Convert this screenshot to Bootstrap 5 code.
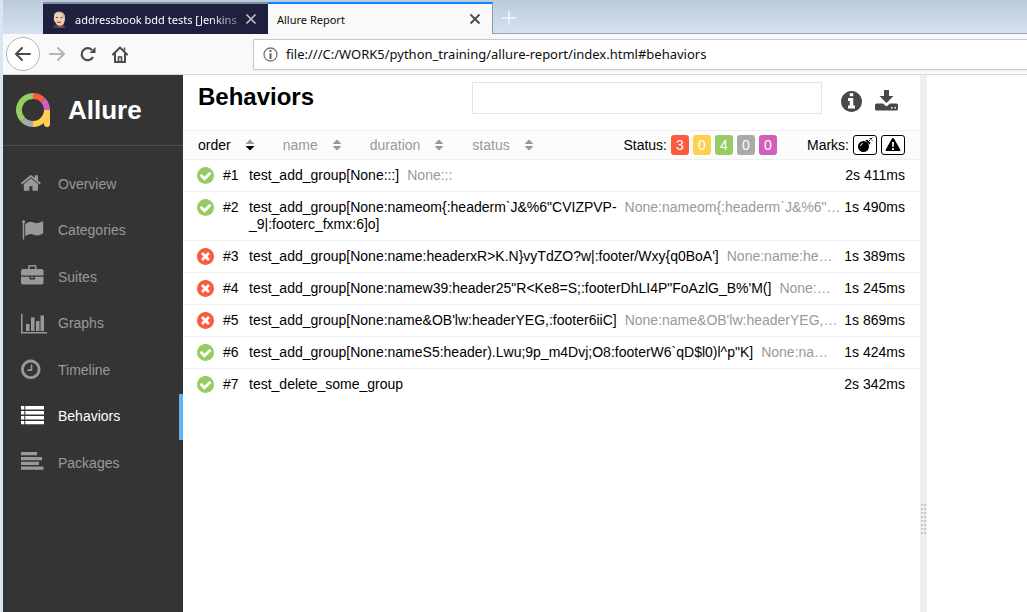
<!DOCTYPE html>
<html lang="en">
<head>
<meta charset="utf-8">
<meta name="viewport" content="width=device-width, initial-scale=1">
<title>Allure Report</title>
<link href="https://cdn.jsdelivr.net/npm/bootstrap@5.3.0/dist/css/bootstrap.min.css" rel="stylesheet">
<style>
body{font:14px/17px "Liberation Sans",Arial,sans-serif;color:#000;background:#fff;fill:currentColor}
button,.btn{font:inherit}
a{text-decoration:none}
svg{display:block;flex:none}
.window-frame{border-left:3px solid #d9e6f2}
.browser-ui{font-family:"Noto Sans","Segoe UI",sans-serif}
.tab-strip{height:34px;padding:2px 0 0 40px;background:linear-gradient(#bccbda,#d5e2f0);font-size:11px}
.tab-item{width:225px;padding:0 9px}
.tab-dark{background:#1f2040;color:#fff;border-top:2px solid #7f8fa5}
.tab-current{background:#f9f9fa;color:#0c0c0d;border-top:2px solid #0a84ff;border-right:1px solid #8b98a8}
.tab-fade{-webkit-mask-image:linear-gradient(90deg,#000 80%,#0004);mask-image:linear-gradient(90deg,#000 80%,#0004)}
.strip-edge{border-bottom:1px solid #97a3b1}
.toolbar{background:#f9f9fa;height:41px;padding-left:3px;border-bottom:1px solid #d9d9db;color:#4a4a4f}
.back-btn{width:34px;height:34px;border:1px solid #b4b4b6;background:#fff;border-radius:50%}
.tool-pair{gap:16px;margin-left:14px}
.url-box{height:31px;margin-left:125px;border:1px solid #c8c8ca;border-right:0;border-radius:2px 0 0 2px;background:#fff;font-size:13px;padding:0 9px;box-shadow:0 1px 3px #0000000d}
.url-box input{color:#0c0c0d;background:none;outline:0}
.side-panel{width:180px;background:#343434;color:#999}
.brand-row{height:71px;border-bottom:1px solid #505050;padding-left:13px;gap:18px;color:#fff;font-size:26px;line-height:32px}
.side-menu{min-height:325px;margin-top:15px}
.side-link{height:46px;padding-left:18px;gap:13px;color:#999}
.side-link svg{width:24px;height:24px}
.side-link:hover{color:#fff}
.side-link.active{color:#fff;border-right:4px solid #63b3f3}
.title-row{height:55px;padding:0 22px 0 15px}
.title-row h1{font-size:24px;line-height:28px;margin:8px 0 0}
.search-field{width:350px;height:32px;border:1px solid #e2e2e2;border-radius:0;margin-top:7px}
.tool-icons{color:#484848;gap:13px;margin:14px 0 0 19px}
.sort-bar{height:30px;background:#fcfcfc;border-top:1px solid #eceff1;border-bottom:1px solid #eceff1;padding:0 15px}
.sorters{gap:28px}
.sorter,.sorter:hover{color:#999;gap:14px}
.sorter.active{color:#000}
.mark-group{margin-left:30px}
.count-btn{width:18px;height:20px;border-radius:3px;color:#fff;line-height:20px}
.c-failed{background:#fd5a3e}.c-broken{background:#ffd050}.c-passed{background:#97cc64}.c-skipped{background:#aaa}.c-unknown{background:#d35ebe}
.mark-btn{width:24px;height:20px;border:1px solid #000;border-radius:3px;background:#fff;color:#000}
.case-row{padding:7px 15px 7px 14px;border-bottom:1px solid #eceff1;color:#000}
.case-row:last-child{border-bottom:0}
.case-row:hover{background:#fafafa}
.case-no{flex:0 0 26px;margin-left:9px}
.case-param{color:#999;min-width:0;margin:0 0 0 8px}
.is-passed{color:#97cc64}.is-failed{color:#fd5a3e}
.splitter{width:7px;background:#eceff1}
.grip{width:5px;height:30px;margin:429px 0 0 1px;background:repeating-linear-gradient(#c8c8c8 0 2px,#eceff1 2px 4px)}
.grip::after{content:"";display:block;width:1px;height:30px;margin-left:2px;background:#eceff1}
.detail-pane{flex:0 0 100px}
</style>
</head>
<body>
<svg width="0" height="0" class="position-absolute" aria-hidden="true">
<symbol id="ok" viewBox="128 128 1536 1536"><path d="M1412 734q0-28-18-46l-91-90q-19-19-45-19t-45 19l-408 407-226-226q-19-19-45-19t-45 19l-91 90q-18 18-18 46 0 27 18 45l362 362q19 19 45 19 27 0 46-19l543-543q18-18 18-45zm252 162q0 209-103 385.500t-279.500 279.500-385.500 103-385.500-103-279.500-279.500-103-385.500 103-385.500 279.500-279.500 385.500-103 385.500 103 279.500 279.500 103 385.500z"/></symbol>
<symbol id="bad" viewBox="128 128 1536 1536"><path d="M1277 1122q0-26-19-45l-181-181 181-181q19-19 19-45 0-27-19-46l-90-90q-19-19-46-19-26 0-45 19l-181 181-181-181q-19-19-45-19-27 0-46 19l-90 90q-19 19-19 46 0 26 19 45l181 181-181 181q-19 19-19 45 0 27 19 46l90 90q19 19 46 19 26 0 45-19l181-181 181 181q19 19 45 19 27 0 46-19l90-90q19-19 19-46zm387-226q0 209-103 385.500t-279.500 279.500-385.500 103-385.500-103-279.500-279.500-103-385.500 103-385.500 279.500-279.500 385.500-103 385.500 103 279.500 279.500 103 385.500z"/></symbol>
<symbol id="updown" viewBox="0 0 10 12"><path d="M5 0.500L9.500 5h-9z"/><path d="M.5 7h9L5 11.500z"/></symbol>
</svg>
<div class="window-frame d-flex flex-column min-vh-100">
  <header class="browser-ui">
    <div class="tab-strip d-flex">
      <div class="tab-item tab-dark d-flex align-items-center">
        <svg width="15" height="17" viewBox="0 0 15 17"><path d="M1 17l1-3 4-1 5 0 3 4z" fill="#344a5b"/><path d="M2 6Q2 1 7 1q6 0 6 6 0 7-5 8-3 0-5-4Q1 9 2 6z" fill="#efcdb2"/><path d="M2 7Q1 1 7 .500 13 1 13 7l-2-1q0-3-2-4-4-1-6 1z" fill="#c7b8a6"/><path d="M4 6.500h2M8.500 6.500h2M5 11q2 1 4 0" stroke="#5b4538" fill="none"/><path d="M6 14l2 1 3-1v3l-3-1-2 1z" fill="#d33833"/></svg>
        <span class="tab-fade text-nowrap overflow-hidden flex-grow-1 ms-1 ps-1">addressbook bdd tests [Jenkins</span>
        <button class="btn p-0 border-0" aria-label="Close tab"><svg width="16" height="16" viewBox="0 0 16 16" fill="none" stroke="#ccccd2" stroke-width="1.500"><path d="M3.500 3.500l9 9m0-9l-9 9"/></svg></button>
      </div>
      <div class="tab-item tab-current d-flex align-items-center">
        <span class="flex-grow-1">Allure Report</span>
        <button class="btn p-0 border-0" aria-label="Close tab"><svg width="16" height="16" viewBox="0 0 16 16" fill="none" stroke="#4a4a4f" stroke-width="1.800"><path d="M3.500 3.500l9 9m0-9l-9 9"/></svg></button>
      </div>
      <div class="strip-edge flex-grow-1 ps-2"><button class="btn p-0 border-0 mt-2" aria-label="New tab"><svg width="16" height="16" viewBox="0 0 16 16" stroke="#f4f7fa" stroke-width="1.500"><path d="M8 1v14M1 8h14"/></svg></button></div>
    </div>
    <div class="toolbar d-flex align-items-center">
      <button class="back-btn p-0 d-flex align-items-center justify-content-center" aria-label="Back"><svg width="18" height="16" viewBox="0 0 18 16" fill="none" stroke="#4a4a4f" stroke-width="2"><path d="M16 8H2m6-6L2 8l6 6" stroke-linecap="round" stroke-linejoin="round"/></svg></button>
      <button class="btn p-0 border-0 ms-2" aria-label="Forward"><svg width="18" height="16" viewBox="0 0 18 16" fill="none" stroke="#b5b5b7" stroke-width="2"><path d="M2 8h14m-6-6l6 6-6 6" stroke-linecap="round" stroke-linejoin="round"/></svg></button>
      <div class="tool-pair d-flex align-items-center">
      <button class="btn p-0 border-0" aria-label="Reload"><svg width="16" height="16" viewBox="0 0 16 16"><path d="M13 11A6 6 0 1 1 12 4" fill="none" stroke="#4a4a4f" stroke-width="2.200"/><path d="M15.500 1v6h-6z" fill="#4a4a4f"/></svg></button>
      <button class="btn p-0 border-0" aria-label="Home"><svg width="16" height="17" viewBox="0 0 16 17" fill="none" stroke="#4a4a4f" stroke-width="2"><path d="M1 8.500l7-7 7 7M3 8v8h10V8" stroke-linecap="round" stroke-linejoin="round"/><path d="M6.500 16v-5h3v5M12.500 1.500v3" stroke-width="1.500"/></svg></button>
      </div>
      <div class="url-box d-flex align-items-center flex-grow-1">
        <svg width="15" height="15" viewBox="0 0 15 15"><circle cx="7.500" cy="7.500" r="6.500" fill="none" stroke="#737377" stroke-width="1.300"/><path d="M6.500 3h2v2h-2zM6.500 6.200h2V12h-2z" fill="#606064"/></svg>
        <input class="border-0 flex-grow-1 p-0 ms-2" aria-label="Address" value="file:///C:/WORK5/python_training/allure-report/index.html#behaviors">
      </div>
    </div>
  </header>
  <div class="d-flex flex-grow-1">
    <aside class="side-panel flex-shrink-0">
      <div class="brand-row d-flex align-items-center fw-bold">
        <svg width="34" height="34" viewBox="0 0 34 34" fill="none" stroke-width="6"><path d="M17 31A14 14 0 0 1 7.100 26.900" stroke="#aaa"/><path d="M7.100 26.900A14 14 0 0 1 17 3" stroke="#97cc64"/><path d="M17 3a14 14 0 0 1 9.900 4.100" stroke="#fd5a3e"/><path d="M26.900 7.100A14 14 0 0 1 31 17" stroke="#d35ebe"/><path d="M31 17A14 14 0 0 1 17 31" stroke="#ffd050"/><path d="M31 17v14" stroke="#ffd050"/><circle cx="31" cy="31" r="3" fill="#ffd050" stroke="none"/></svg>
        <span>Allure</span>
      </div>
      <nav class="side-menu d-flex flex-column justify-content-between" aria-label="Report">
        <a class="side-link d-flex align-items-center" href="#overview"><svg viewBox="90 0 1955 1955"><path d="M1472 992v480q0 26-19 45t-45 19h-384v-384h-256v384h-384q-26 0-45-19t-19-45v-480q0-1 .5-3t.5-3l575-474 575 474q1 2 1 6zm223-69l-62 74q-8 9-21 11h-3q-13 0-21-7l-692-577-692 577q-12 8-24 7-13-2-21-11l-62-74q-8-10-7-23.500t11-21.500l719-599q32-26 76-26t76 26l244 204v-195q0-14 9-23t23-9h192q14 0 23 9t9 23v408l219 182q10 8 11 21.500t-7 23.500z"/></svg>Overview</a>
        <a class="side-link d-flex align-items-center" href="#categories"><svg viewBox="0 0 24 24"><path d="M1 3a1.600 1.600 0 1 1 2.200 1.300V20a.7.700 0 0 1-1.400 0V4.300Q1 3.900 1 3z"/><path d="M4.200 5Q9 1.500 12.500 3.500 16 5.500 21 2.600q1.200-.6 1.200.6v10.600q0 .6-.6 1-5 3-8.800 1Q9.500 13.800 4.200 17z"/></svg>Categories</a>
        <a class="side-link d-flex align-items-center" href="#suites"><svg viewBox="0 0 24 24"><path d="M7 4V1.500Q7 0 8.500 0h5.500Q15.500 0 15.500 1.500V4H20.500Q22.500 4 22.500 6v4.500H0V6Q0 4 2 4zM8.500 4h5.500V1.500H8.500z" fill-rule="evenodd"/><path d="M0 11.800h8.500V14.500h5.500v-2.700h8.500v5.700q0 2-2 2H2q-2 0-2-2zM10 11.800h2.500V13H10z"/></svg>Suites</a>
        <a class="side-link d-flex align-items-center" href="#graphs"><svg viewBox="0 0 24 24" overflow="visible"><path d="M0 2h1.500v18H26v1.500H0zM5 12h3.500v7H5zM10 5.500h3.500V19H10zM15 9h3.500v10H15zM19.500 3.500H23V19h-3.500z"/></svg>Graphs</a>
        <a class="side-link d-flex align-items-center" href="#timeline"><svg viewBox="128 0 1892 1892"><path d="M1024 544v448q0 14-9 23t-23 9h-320q-14 0-23-9t-9-23v-64q0-14 9-23t23-9h224v-352q0-14 9-23t23-9h64q14 0 23 9t9 23zm416 352q0-148-73-273t-198-198-273-73-273 73-198 198-73 273 73 273 198 198 273 73 273-73 198-198 73-273zm224 0q0 209-103 385.500t-279.500 279.500-385.500 103-385.500-103-279.500-279.500-103-385.500 103-385.500 279.500-279.500 385.500-103 385.500 103 279.500 279.500 103 385.500z"/></svg>Timeline</a>
        <a class="side-link active d-flex align-items-center" href="#behaviors" aria-current="page"><svg viewBox="0 0 24 24"><path d="M0 1h3.300v3.600H0zM4.300 1H23v3.600H4.300zM0 6h3.300v3.600H0zM4.300 6H23v3.600H4.300zM0 11h3.300v3.600H0zM4.300 11H23v3.600H4.300zM0 16h3.300v3.200H0zM4.300 16H23v3.200H4.300z"/></svg>Behaviors</a>
        <a class="side-link d-flex align-items-center" href="#packages"><svg viewBox="0 0 24 24"><path d="M0 1h16v3.200H0zM0 6h21v3.200H0zM0 10.700h18v3.200H0zM0 15.500h22.500v3.200H0z"/></svg>Packages</a>
      </nav>
    </aside>
    <main class="flex-grow-1 overflow-hidden">
      <div class="title-row d-flex align-items-start">
        <h1 class="fw-bold">Behaviors</h1>
        <input type="search" class="search-field ms-auto px-2" aria-label="Search">
        <div class="tool-icons d-flex align-items-end">
          <button class="btn p-0 border-0" aria-label="Information"><svg width="21" height="21" viewBox="128 128 1536 1536" color="#484848"><path d="M1152 1376v-160q0-14-9-23t-23-9h-96v-512q0-14-9-23t-23-9h-320q-14 0-23 9t-9 23v160q0 14 9 23t23 9h96v320h-96q-14 0-23 9t-9 23v160q0 14 9 23t23 9h448q14 0 23-9t9-23zm-128-896v-160q0-14-9-23t-23-9h-192q-14 0-23 9t-9 23v160q0 14 9 23t23 9h192q14 0 23-9t9-23zm640 416q0 209-103 385.500t-279.500 279.500-385.500 103-385.500-103-279.500-279.500-103-385.500 103-385.500 279.500-279.500 385.500-103 385.500 103 279.500 279.500 103 385.500z"/></svg></button>
          <button class="btn p-0 border-0" aria-label="Download"><svg width="23" height="23" viewBox="0 0 23 23" color="#484848"><path d="M9 1h5v6h4.500L11.500 14 4.500 7H9z"/><path d="M1.500 14.500H8l3.500 3 3.500-3h6.500q1.500 0 1.500 1.500v4q0 1.500-1.500 1.500h-20Q0 21.500 0 20v-4q0-1.500 1.500-1.500zM16 18v1.500h1.500V18zm3.500 0v1.500H21V18z" fill-rule="evenodd"/></svg></button>
        </div>
      </div>
      <div class="sort-bar d-flex align-items-center">
        <div class="sorters d-flex">
          <button class="sorter active btn p-0 border-0 d-flex align-items-center">order <svg width="10" height="12" viewBox="0 0 10 12"><path d="M5 .5L9.500 5h-9z" fill="#999"/><path d="M.5 7h9L5 11.500z"/></svg></button>
          <button class="sorter btn p-0 border-0 d-flex align-items-center">name <svg width="10" height="12"><use href="#updown"/></svg></button>
          <button class="sorter btn p-0 border-0 d-flex align-items-center">duration <svg width="10" height="12"><use href="#updown"/></svg></button>
          <button class="sorter btn p-0 border-0 d-flex align-items-center">status <svg width="10" height="12"><use href="#updown"/></svg></button>
        </div>
        <div class="d-flex align-items-center ms-auto gap-1">
          <span>Status:</span>
          <button class="count-btn c-failed p-0 border-0">3</button>
          <button class="count-btn c-broken p-0 border-0">0</button>
          <button class="count-btn c-passed p-0 border-0">4</button>
          <button class="count-btn c-skipped p-0 border-0">0</button>
          <button class="count-btn c-unknown p-0 border-0">0</button>
        </div>
        <div class="mark-group d-flex align-items-center gap-1">
          <span>Marks:</span>
          <button class="mark-btn p-0 d-flex align-items-center justify-content-center" aria-label="Flaky"><svg width="16" height="16" viewBox="0 0 16 16"><circle cx="6.500" cy="9.500" r="5.500"/><path d="M8.500 3.500l1.500-1 3.500 3.500-1 1.500z"/><path d="M11.500 4.500l2-2M13 1l.5 1M15.500 3.500l-1-.5M14 2l1.500-1.500" stroke="#000" fill="none"/><path d="M3.500 9q.3-2 2.300-2.500" fill="none" stroke="#fff"/></svg></button>
          <button class="mark-btn p-0 d-flex align-items-center justify-content-center" aria-label="New failed"><svg width="16" height="16" viewBox="0 0 16 16"><path d="M8 1q.7 0 1 .6l6.300 11.200q.5 1.200-.8 1.200h-13Q.2 14 .7 12.800L7 1.600Q7.300 1 8 1zM7 5l.3 5h1.400L9 5zm0 6.200V13h2v-1.800z" fill-rule="evenodd"/></svg></button>
        </div>
      </div>
      <div>
        <a class="case-row d-flex" href="#case1"><svg class="is-passed" width="17" height="17"><use href="#ok"/></svg><span class="case-no">#1</span><span class="text-nowrap">test_add_group[None:::]</span><span class="case-param text-truncate">None:::</span><span class="text-nowrap ms-auto">2s 411ms</span></a>
        <a class="case-row d-flex" href="#case2"><svg class="is-passed" width="17" height="17"><use href="#ok"/></svg><span class="case-no">#2</span><span class="text-nowrap">test_add_group[None:nameom{:headerm`J&amp;%6"CVIZPVP-<br>_9|:footerc_fxmx:6]o]</span><span class="case-param text-truncate">None:nameom{:headerm`J&amp;%6"…</span><span class="text-nowrap ms-auto">1s 490ms</span></a>
        <a class="case-row d-flex" href="#case3"><svg class="is-failed" width="17" height="17"><use href="#bad"/></svg><span class="case-no">#3</span><span class="text-nowrap">test_add_group[None:name:headerxR&gt;K.N}vyTdZO?w|:footer/Wxy{q0BoA']</span><span class="case-param text-truncate">None:name:he…</span><span class="text-nowrap ms-auto">1s 389ms</span></a>
        <a class="case-row d-flex" href="#case4"><svg class="is-failed" width="17" height="17"><use href="#bad"/></svg><span class="case-no">#4</span><span class="text-nowrap">test_add_group[None:namew39:header25"R&lt;Ke8=S;:footerDhLI4P"FoAzlG_B%'M(]</span><span class="case-param text-truncate">None:…</span><span class="text-nowrap ms-auto">1s 245ms</span></a>
        <a class="case-row d-flex" href="#case5"><svg class="is-failed" width="17" height="17"><use href="#bad"/></svg><span class="case-no">#5</span><span class="text-nowrap">test_add_group[None:name&amp;OB'lw:headerYEG,:footer6iiC]</span><span class="case-param text-truncate">None:name&amp;OB'lw:headerYEG,…</span><span class="text-nowrap ms-auto">1s 869ms</span></a>
        <a class="case-row d-flex" href="#case6"><svg class="is-passed" width="17" height="17"><use href="#ok"/></svg><span class="case-no">#6</span><span class="text-nowrap">test_add_group[None:nameS5:header).Lwu;9p_m4Dvj;O8:footerW6`qD$l0)l^p"K]</span><span class="case-param text-truncate">None:na…</span><span class="text-nowrap ms-auto">1s 424ms</span></a>
        <a class="case-row d-flex" href="#case7"><svg class="is-passed" width="17" height="17"><use href="#ok"/></svg><span class="case-no">#7</span><span class="text-nowrap">test_delete_some_group</span><span class="text-nowrap ms-auto">2s 342ms</span></a>
      </div>
    </main>
    <div class="splitter flex-shrink-0" role="separator" aria-orientation="vertical"><div class="grip"></div></div>
    <section class="detail-pane" aria-label="Test details"></section>
  </div>
</div>
<script src="https://cdn.jsdelivr.net/npm/bootstrap@5.3.0/dist/js/bootstrap.bundle.min.js"></script>
</body>
</html>
